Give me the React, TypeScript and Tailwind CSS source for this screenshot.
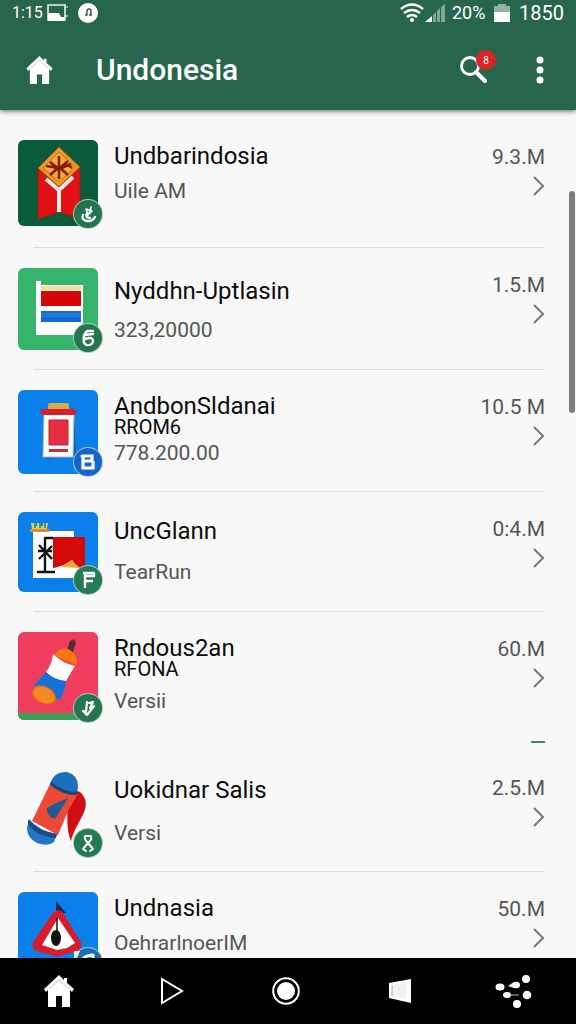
import React from 'react'

interface AppEntry {
  title: string
  extra?: string
  detail: string
  size: string
  tile: string
  row: string
  text: string
  detailGap: string
  divider: 'line' | 'dash'
  art: React.ReactNode
  badge: React.ReactNode
  badgeColor: string
}

const markProps = {
  viewBox: '0 0 28 28',
  className: 'h-7 w-7',
  fill: 'none',
  stroke: 'white',
  strokeWidth: 2.4,
  strokeLinecap: 'round' as const,
  strokeLinejoin: 'round' as const,
}

const entries: AppEntry[] = [
  {
    title: 'Undbarindosia',
    detail: 'Uile AM',
    size: '9.3.M',
    tile: 'h-[86px] bg-[#0b5a3c]',
    row: 'h-[107px]',
    text: 'pt-[5px]',
    detailGap: 'mt-3',
    divider: 'line',
    badgeColor: 'bg-[#24754f]',
    badge: (
      <svg {...markProps}>
        <path d="M9 15c-3 6 8 9 12 2M15 13c-4 1-3 5 1 5" />
        <path d="M12 9l6 2-4 4zM17 7l-1 5" strokeWidth="1.6" />
      </svg>
    ),
    art: (
      <svg viewBox="0 0 80 86" className="h-full w-full">
        <path d="M20 28h42v51L41 72 20 79z" fill="#e30f14" stroke="#7e2c1e" />
        <path d="M28 39l13 11 14-13M41 49v23" fill="none" stroke="#fbe9ea" strokeWidth="4" />
        <path d="M41 7l21 20-21 20-21-19z" fill="#eb9b24" stroke="#a34b16" />
        <path d="M41 12l16 15-16 15-16-14z" fill="#f4ad36" stroke="#c56a18" />
        <path d="M41 16v23M28 26l7 1 6 2 12-5M32 35l9-8 9 8M32 22l9 7 9-8M50 25l4 3" fill="none" stroke="#8c170c" strokeWidth="2.6" />
      </svg>
    ),
  },
  {
    title: 'Nyddhn-Uptlasin',
    detail: '323,20000',
    size: '1.5.M',
    tile: 'h-[82px] bg-[#37b46b]',
    row: 'h-[101px]',
    text: 'pt-3',
    detailGap: 'mt-4',
    divider: 'line',
    badgeColor: 'bg-[#257650]',
    badge: (
      <svg {...markProps}>
        <path d="M19 7h-6c-4 4-5 13 0 14 7 1 8-8 2-7l-4 1M10 11l9-1" />
      </svg>
    ),
    art: (
      <svg viewBox="0 0 80 82" className="h-full w-full">
        <path d="M18 13h5v4h42v50H18z" fill="#fff" />
        <path d="M23 18h40v4H23z" fill="#f3dc9d" />
        <path d="M23 23h40v15H23z" fill="#d90505" />
        <path d="M23 43h40v11H23z" fill="#1268d6" />
        <path d="M23 45h40v4H23z" fill="#2077e0" />
      </svg>
    ),
  },
  {
    title: 'AndbonSldanai',
    extra: 'RROM6',
    detail: '778.200.00',
    size: '10.5 M',
    tile: 'h-[84px] bg-[#0c80ea]',
    row: 'h-[101px]',
    text: 'pt-[5px]',
    detailGap: 'mt-1',
    divider: 'line',
    badgeColor: 'bg-[#1465cb]',
    badge: (
      <svg {...markProps} strokeWidth={3.2}>
        <path d="M8 8h10v5H9v7h10v-6l-2-1H9V8" strokeLinejoin="miter" />
      </svg>
    ),
    art: (
      <svg viewBox="0 0 80 84" className="h-full w-full">
        <path d="M26 24h30l2 42-30 3z" fill="#0960ae" />
        <rect x="30" y="13" width="21" height="8" rx="2" fill="#d1ad4d" />
        <path d="M26 24h30l-1 43H25z" fill="#fff" stroke="#a9bed2" />
        <rect x="23" y="19" width="35" height="6" rx="2" fill="#e01c27" />
        <path d="M31 30h19v25H31z" fill="#e62e40" stroke="#b42839" />
        <path d="M31 59h19v3H31z" fill="#c72e42" />
      </svg>
    ),
  },
  {
    title: 'UncGlann',
    detail: 'TearRun',
    size: '0:4.M',
    tile: 'h-20 bg-[#0c80ea]',
    row: 'h-[99px]',
    text: 'pt-2',
    detailGap: 'mt-[18px]',
    divider: 'line',
    badgeColor: 'bg-[#257b55]',
    badge: (
      <svg {...markProps} strokeLinecap="butt">
        <path d="M9 7h11v3H10M11 22v-7h8M11 8v14" strokeWidth="2.4" />
      </svg>
    ),
    art: (
      <svg viewBox="0 0 80 80" className="h-full w-full">
        <path d="M15 19h41v47H15z" fill="#fff" />
        <path d="M12 17h19v3H12z" fill="#e78632" />
        <path d="M13 11h3v3h3v-3h3v3h3v-3h5l-1 6H14z" fill="#dccb6e" />
        <path d="M17 11v5M22 11v5M27 11v5" stroke="#34a06a" strokeWidth="2" />
        <path d="M35 25h32v31H35z" fill="#d40808" />
        <path d="M36 56l10-3 8-5 3 4 5 4v9H42z" fill="#fff" />
        <path d="M43 55l11-7 3 4 5 4z" fill="#f2a634" />
        <path d="M27 25v35M19 60h18M27 26h8M21 33l13 14M34 34L21 47M20 39h14" fill="none" stroke="#111" strokeWidth="2.4" />
      </svg>
    ),
  },
  {
    title: 'Rndous2an',
    extra: 'RFONA',
    detail: 'Versii',
    size: '60.M',
    tile: 'h-[88px] bg-[#f03d5e]',
    row: 'h-[109px]',
    text: 'pt-[5px]',
    detailGap: 'mt-2.5',
    divider: 'dash',
    badgeColor: 'bg-[#257650]',
    badge: (
      <svg {...markProps}>
        <path d="M13 8l-1 10-3-1 4 4 7-9M15 9l4-1-3 6" strokeWidth="2.2" />
      </svg>
    ),
    art: (
      <svg viewBox="0 0 80 88" className="h-full w-full rounded-md">
        <path d="M0 81h80v7H0z" fill="#3f9f57" />
        <path d="M49 19l3-10 4-2 2 4-4 11z" fill="#53302f" />
        <path d="M38 21q6-7 14-3 8 5 7 15l-23-9z" fill="#f47b12" />
        <path d="M35 22q9 9 22 12-4 6-9 15-11 0-20-9 6-8 7-18z" fill="#fff" />
        <path d="M28 40q8 8 20 9-1 10-6 19L14 57q5-8 14-17z" fill="#1770d8" />
        <ellipse cx="26" cy="63" rx="12" ry="8" transform="rotate(27 26 63)" fill="#f58a24" stroke="#e56d13" strokeWidth="1.5" />
      </svg>
    ),
  },
  {
    title: 'Uokidnar Salis',
    detail: 'Versi',
    size: '2.5.M',
    tile: 'h-[84px]',
    row: 'h-[100px]',
    text: 'pt-2',
    detailGap: 'mt-5',
    divider: 'line',
    badgeColor: 'bg-[#257b50]',
    badge: (
      <svg {...markProps} strokeWidth={2}>
        <path d="M11 7q-1 3 3 7l5 6M17 7q1 4-3 7l-5 6M11 7h6M9 20l3 2M16 22l3-2" />
      </svg>
    ),
    art: (
      <svg viewBox="0 0 80 84" className="h-full w-full">
        <path d="M55 20q8-2 12 8c4 13-9 23-14 42-5-12-3-23-4-34z" fill="#d20d12" />
        <path d="M32 13l28 10-10 17-10 24-26-14z" fill="#ee4936" />
        <path d="M50 27q-5 9-13 21-9-3-8-11 10-6 21-10z" fill="#245b91" />
        <path d="M32 13q4-13 17-12 11 3 11 14l-1 9q-14-1-27-11z" fill="#1c6fbe" />
        <path d="M33 11q13 10 27 10l-1 3q-15 0-27-10z" fill="#174778" />
        <path d="M11 48q10 12 28 15l-3 8q-6 5-17 1Q9 67 9 57z" fill="#2274c4" />
        <path d="M10 49q12 12 29 14l-1 4Q19 66 10 53z" fill="#174c83" />
      </svg>
    ),
  },
  {
    title: 'Undnasia',
    detail: 'OehrarlnoerIM',
    size: '50.M',
    tile: 'h-[82px] bg-[#0c80ea]',
    row: 'h-[110px]',
    text: 'pt-[5px]',
    detailGap: 'mt-3',
    divider: 'line',
    badgeColor: 'bg-[#1470b8]',
    badge: (
      <svg {...markProps}>
        <path d="M-6 3h12l-3 7h-9z" fill="#dff3ee" stroke="none" />
        <path d="M9 11q3-4 10-4v6" strokeWidth="3" />
      </svg>
    ),
    art: (
      <svg viewBox="0 0 80 82" className="h-full w-full">
        <path d="M38 9l10 12H38z" fill="#132d60" />
        <path d="M40 25l17 28-18 5-18-5z" fill="#d81c2b" stroke="#d81c2b" strokeWidth="13" strokeLinejoin="round" />
        <path d="M40 26l17 25-8 5-10 2-15-5z" fill="#fff" />
        <path d="M39 26v16" stroke="#111" strokeWidth="1.5" />
        <ellipse cx="38" cy="46" rx="5" ry="8" fill="#111" />
      </svg>
    ),
  },
]

const House = ({ className }: { className: string }) => (
  <svg viewBox="0 0 30 32" className={className} fill="white">
    <path d="M15 0l5 5V3h3v5l7 6-2 3-2-2v17h-8V21h-6v11H4V15l-2 2-2-3z" />
    <path d="M5 14L15 5l10 9" fill="none" stroke="#999" strokeWidth=".6" />
  </svg>
)

const StatusBar = () => (
  <div className="flex h-[26px] items-center px-3 text-xl leading-6">
    <span className="w-[34px] text-base">1:15</span>
    <svg viewBox="0 0 24 20" className="h-5 w-6" fill="none" stroke="#e8f4ee">
      <path d="M2 2h17v15H2z" strokeWidth="1.6" />
      <path d="M2 10h11l2 4h4v4H2z" fill="#fff" stroke="none" />
      <path d="M19 4h3M19 13h3" />
    </svg>
    <svg viewBox="0 0 20 20" className="ml-2 h-5 w-5">
      <circle cx="10" cy="10" r="10" fill="#fff" />
      <path d="M7 12h2V8q0-2 2-2t2 2v2l-1 2h2" fill="none" stroke="#315746" strokeWidth="1.4" />
    </svg>
    <svg viewBox="0 0 24 20" className="ml-auto h-5 w-6" fill="none" stroke="white" strokeWidth="2.4">
      <path d="M1 6q11-9 22 0M4 10q8-6 16 0M7 14q5-4 10 0" />
      <circle cx="12" cy="17" r="2" fill="white" stroke="none" />
    </svg>
    <svg viewBox="0 0 22 20" className="h-5 w-[22px]">
      <path d="M1 19l7-6v6z" fill="#fff" />
      <path d="M9 12l3-3v10H9zM13 8l3-3v14h-3zM17 4l4-3v18h-4z" fill="#80a997" />
    </svg>
    <span className="ml-1.5 w-[38px] text-lg">20%</span>
    <svg viewBox="0 0 16 20" className="ml-1 h-5 w-4">
      <path d="M0 3h4V1h8v2h4v8H0z" fill="#91b5a5" />
      <path d="M0 9h16v10H0z" fill="#fff" />
    </svg>
    <span className="ml-2 w-[46px] text-right">1850</span>
  </div>
)

const EntryRow = ({ entry }: { entry: AppEntry }) => (
  <li className="mr-[31px] ml-[18px] pt-5">
    <a href="#" className={`flex ${entry.row}`}>
      <div className={`relative w-20 shrink-0 rounded-md ${entry.tile}`}>
        {entry.art}
        <span
          className={`absolute -right-1 -bottom-0.5 flex h-7 w-7 items-center justify-center rounded-full ring-1 ring-[#a8c9ba] ${entry.badgeColor}`}
        >
          {entry.badge}
        </span>
      </div>
      <div className={`min-w-0 flex-1 pl-4 ${entry.text}`}>
        <h2 className="text-2xl leading-[22px] text-[#0c0c0c]">{entry.title}</h2>
        {entry.extra && <p className="text-xl leading-5 text-[#0c0c0c]">{entry.extra}</p>}
        <p className={`text-[21px] leading-6 text-[#555] ${entry.detailGap}`}>{entry.detail}</p>
      </div>
      <div className="flex flex-col items-end pt-1.5 text-[21px] leading-[22px] text-[#555]">
        <span>{entry.size}</span>
        <svg viewBox="0 0 12 20" className="mt-2 h-5 w-3" fill="none" stroke="#777" strokeWidth="2">
          <path d="M1 1l9 9-9 9" />
        </svg>
      </div>
    </a>
    {entry.divider === 'dash' ? (
      <div className="mb-2 ml-auto h-0.5 w-3.5 bg-[#4e7f69]" />
    ) : (
      <div className="ml-4 h-px bg-[#dedfe0]" />
    )}
  </li>
)

const navButton = 'flex h-full flex-1 items-center justify-center'

export default function App() {
  return (
    <div className="flex h-screen flex-col overflow-hidden bg-[#f8f8f9] font-['Roboto',sans-serif]">
      <header className="relative z-10 h-[110px] shrink-0 bg-[#27664c] text-white shadow-[0_1px_5px_rgba(0,0,0,0.6)]">
        <StatusBar />
        <div className="flex h-[88px] items-center pr-6 pl-[26px]">
          <button type="button" aria-label="Home">
            <House className="h-7 w-[27px]" />
          </button>
          <h1 className="ml-[43px] flex-1 text-3xl leading-10 font-medium">Undonesia</h1>
          <button type="button" aria-label="Search" className="relative mr-8 h-8 w-9">
            <svg viewBox="0 0 36 32" className="h-8 w-9" fill="none" stroke="white">
              <circle cx="10" cy="12" r="8.5" strokeWidth="2.8" />
              <path d="M16 18l9 9" strokeWidth="4" strokeLinecap="round" />
            </svg>
            <span className="absolute -top-1 right-0 flex h-5 w-5 items-center justify-center rounded-full bg-[#d92325] text-[10px]">
              8
            </span>
          </button>
          <button type="button" aria-label="More options">
            <svg viewBox="0 0 24 28" className="h-7 w-6" fill="white">
              <circle cx="12" cy="4" r="3.5" />
              <circle cx="12" cy="14" r="3.5" />
              <circle cx="12" cy="24" r="3.5" />
            </svg>
          </button>
        </div>
      </header>

      <main className="relative min-h-0 flex-1 overflow-hidden pt-2.5">
        <ul>
          {entries.map((entry) => (
            <EntryRow key={entry.title} entry={entry} />
          ))}
        </ul>
        <div className="absolute top-[81px] right-px h-[222px] w-1.5 rounded-full bg-[#7c7e7e]" />
      </main>

      <nav className="relative z-10 flex h-[66px] shrink-0 items-center bg-black pr-1.5 pl-0.5">
        <button type="button" aria-label="Home" className={navButton}>
          <House className="h-8 w-[30px]" />
        </button>
        <button type="button" aria-label="Play" className={navButton}>
          <svg viewBox="0 0 24 28" className="h-7 w-6" fill="none" stroke="white" strokeWidth="2">
            <path d="M2 2l20 12L2 26z" />
          </svg>
        </button>
        <button type="button" aria-label="Record" className={navButton}>
          <svg viewBox="0 0 28 28" className="h-7 w-7">
            <circle cx="14" cy="14" r="12.8" fill="none" stroke="white" strokeWidth="2" />
            <circle cx="14" cy="14" r="9" fill="white" />
          </svg>
        </button>
        <button type="button" aria-label="Back" className={navButton}>
          <svg viewBox="0 0 24 26" className="h-[26px] w-6">
            <path d="M1 5l22-4v24L1 20z" fill="#fff" />
            <path d="M4 7l14-3v17L4 18z" fill="#f1f1f1" />
            <path d="M4 7v11" stroke="#aaa" />
          </svg>
        </button>
        <button type="button" aria-label="Share" className={navButton}>
          <svg viewBox="0 0 38 34" className="h-[34px] w-[38px]" fill="white">
            <ellipse cx="6" cy="13" rx="4.5" ry="3.5" />
            <path d="M14 12l6-4q6-1 6 3t-6 3z" />
            <circle cx="32" cy="5" r="4" />
            <ellipse cx="13" cy="21" rx="4" ry="3" />
            <path d="M16 21h9" stroke="#bbb" />
            <circle cx="33" cy="21" r="4.3" />
            <circle cx="23" cy="30" r="4" />
          </svg>
        </button>
      </nav>
    </div>
  )
}
